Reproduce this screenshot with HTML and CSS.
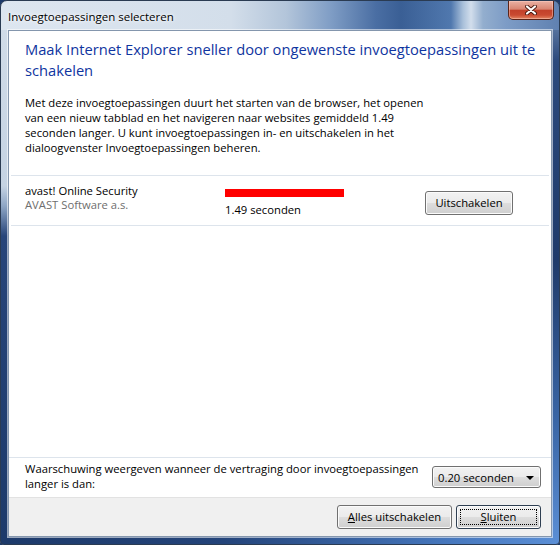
FILE: index.html
```html
<!DOCTYPE html>
<html lang="nl">
<head>
<meta charset="utf-8">
<title>Invoegtoepassingen selecteren</title>
<link rel="stylesheet" href="styles.css">
</head>
<body>
<div class="window">
  <div class="titlebar">
    <span class="title">Invoegtoepassingen selecteren</span>
    <div class="close">
      <svg width="12" height="10" viewBox="0 0 12 10">
        <path d="M2 1.5 L10 8.5 M10 1.5 L2 8.5" stroke="#4a1a10" stroke-width="4" stroke-linecap="round"/>
        <path d="M2 1.5 L10 8.5 M10 1.5 L2 8.5" stroke="#ffffff" stroke-width="2.2" stroke-linecap="round"/>
      </svg>
    </div>
  </div>
  <div class="client">
    <div class="content">
      <h1 class="main">Maak Internet Explorer sneller door ongewenste invoegtoepassingen uit te<br>schakelen</h1>
      <p class="desc">Met deze invoegtoepassingen duurt het starten van de browser, het openen<br>van een nieuw tabblad en het navigeren naar websites gemiddeld 1.49<br>seconden langer. U kunt invoegtoepassingen in- en uitschakelen in het<br>dialoogvenster Invoegtoepassingen beheren.</p>
      <div class="list">
        <div class="row">
          <div class="name">
            <div>avast! Online Security</div>
            <div class="pub">AVAST Software a.s.</div>
          </div>
          <div class="timing">
            <div class="bar" style="width:119px"></div>
            <div class="secs">1.49 seconden</div>
          </div>
          <button class="btn btn-row">Uitschakelen</button>
        </div>
      </div>
    </div>
    <div class="threshold">
      <div class="label">Waarschuwing weergeven wanneer de vertraging door invoegtoepassingen<br>langer is dan:</div>
      <div class="combo"><span>0.20 seconden</span><span class="arrow"></span></div>
    </div>
    <div class="footer">
      <button class="btn btn-all"><u>A</u>lles uitschakelen</button>
      <button class="btn btn-close btn-default"><u>S</u>luiten</button>
    </div>
  </div>
</div>
</body>
</html>
```

FILE: styles.css
```css
html, body {
  margin: 0;
  padding: 0;
  background: #1d3a6a;
}
body {
  width: 560px;
  height: 545px;
  overflow: hidden;
  font-family: "Open Sans", "Noto Sans", sans-serif;
  font-size: 11.25px;
  color: #000;
}
.window {
  width: 560px;
  height: 545px;
  box-sizing: border-box;
  display: flex;
  flex-direction: column;
  border: 1px solid #2a3b52;
  border-radius: 7px 7px 4px 4px;
  padding: 0 7px 7px 7px;
  background:
    linear-gradient(to right, #dde6f0 0, #d3deea 230px, #b3c5da 285px, #7f9dc5 330px, #4a6ea3 375px, #3a5f95 400px, #5078ae 450px, #a9c0da 462px, #d2deec 470px, #93aece 482px, #7d9cc6 505px, #5f80b0 560px) left top / 100% 29px no-repeat,
    linear-gradient(to bottom, #d2dde9 0, #c5d3e3 185px, #8ea6c5 205px, #27457a 235px, #1d3a6a 100%) left top / 7px 100% no-repeat,
    linear-gradient(to bottom, #7b97bb 0, #2c4a7d 60px, #1f3b6b 260px, #3a66a6 420px, #5b8fd6 100%) right top / 7px 100% no-repeat,
    linear-gradient(to right, #1d3a6a 0, #24447a 40%, #4677bd 80%, #5b8fd6 100%) left bottom / 100% 7px no-repeat,
    #c5d3e3;
}
.titlebar {
  height: 29px;
  margin: 0 -7px;
  display: flex;
  justify-content: space-between;
  align-items: flex-start;
}
.title {
  padding: 8px 0 0 7px;
  line-height: 15px;
  font-size: 11.5px;
  color: #000;
  white-space: nowrap;
  text-shadow: 0 0 6px rgba(255, 255, 255, 0.95), 0 0 3px rgba(255, 255, 255, 0.9);
}
.close {
  width: 46px;
  height: 19px;
  box-sizing: border-box;
  margin-right: 5px;
  border: 1px solid #5b2418;
  border-top: none;
  border-radius: 0 0 5px 5px;
  background: linear-gradient(to bottom, #eab1a3 0%, #d98572 45%, #c2412a 52%, #c94a31 78%, #e38561 100%);
  box-shadow: inset 0 0 0 1px rgba(255, 210, 200, 0.45);
  display: flex;
  align-items: center;
  justify-content: center;
}
.client {
  flex: 1;
  display: flex;
  flex-direction: column;
  background: #fff;
  border: 1px solid #8496ad;
  box-shadow: 0 0 0 1px rgba(255, 255, 255, 0.55);
}
.content {
  flex: 1;
  padding: 8px 16px 0 16px;
}
.main {
  margin: 0;
  font-size: 14.7px;
  line-height: 21px;
  font-weight: normal;
  color: #0f35a0;
  white-space: nowrap;
}
.desc {
  margin: 14px 0 20px 0;
  line-height: 15px;
  white-space: nowrap;
}
.list {
  margin: 0 -14px;
  border-top: 1px solid #dde4ec;
}
.row {
  height: 50px;
  box-sizing: border-box;
  padding: 8px 14px 0 14px;
  border-bottom: 1px solid #dde4ec;
  display: flex;
  align-items: flex-start;
  line-height: 14px;
}
.name {
  width: 200px;
}
.pub {
  color: #6e6e6e;
}
.timing {
  width: 200px;
}
.bar {
  height: 8px;
  margin-top: 5px;
  background: #ff0000;
}
.secs {
  margin-top: 6px;
}
.btn {
  position: relative;
  height: 24px;
  box-sizing: border-box;
  padding: 0;
  border: 1px solid #707070;
  border-radius: 3px;
  background: linear-gradient(to bottom, #f2f2f2 0%, #ebebeb 48%, #dddddd 52%, #cfcfcf 100%);
  box-shadow: inset 0 0 0 1px #fbfbfb;
  font-family: "Open Sans", "Noto Sans", sans-serif;
  font-size: 11.25px;
  color: #000;
  line-height: 20px;
}
.btn-row {
  width: 88px;
  margin-top: 7px;
}
.threshold {
  height: 40px;
  box-sizing: border-box;
  border-top: 1px solid #dde4ec;
  padding: 3px 10px 0 16px;
  display: flex;
  justify-content: space-between;
  align-items: flex-start;
  line-height: 15px;
}
.label {
  white-space: nowrap;
}
.combo {
  width: 109px;
  height: 22px;
  box-sizing: border-box;
  margin-top: 5px;
  padding: 0 6px 0 5px;
  border: 1px solid #707070;
  border-radius: 3px;
  background: linear-gradient(to bottom, #f2f2f2 0%, #ebebeb 48%, #dddddd 52%, #cfcfcf 100%);
  box-shadow: inset 0 0 0 1px #fbfbfb;
  display: flex;
  align-items: center;
  justify-content: space-between;
}
.arrow {
  width: 0;
  height: 0;
  border-left: 4px solid transparent;
  border-right: 4px solid transparent;
  border-top: 4px solid #000;
  margin-top: 1px;
}
.footer {
  height: 39px;
  box-sizing: border-box;
  background: #f0f0f0;
  border-top: 1px solid #e2e2e2;
  padding: 7px 10px 0 0;
  display: flex;
  justify-content: flex-end;
  align-items: flex-start;
  gap: 4px;
}
.btn-all {
  width: 115px;
}
.btn-close {
  width: 85px;
}
.btn-default {
  border-color: #2f3f52;
}
.btn-default::after {
  content: "";
  position: absolute;
  left: 3px;
  top: 3px;
  right: 3px;
  bottom: 3px;
  border: 1px dotted #000;
}
```
